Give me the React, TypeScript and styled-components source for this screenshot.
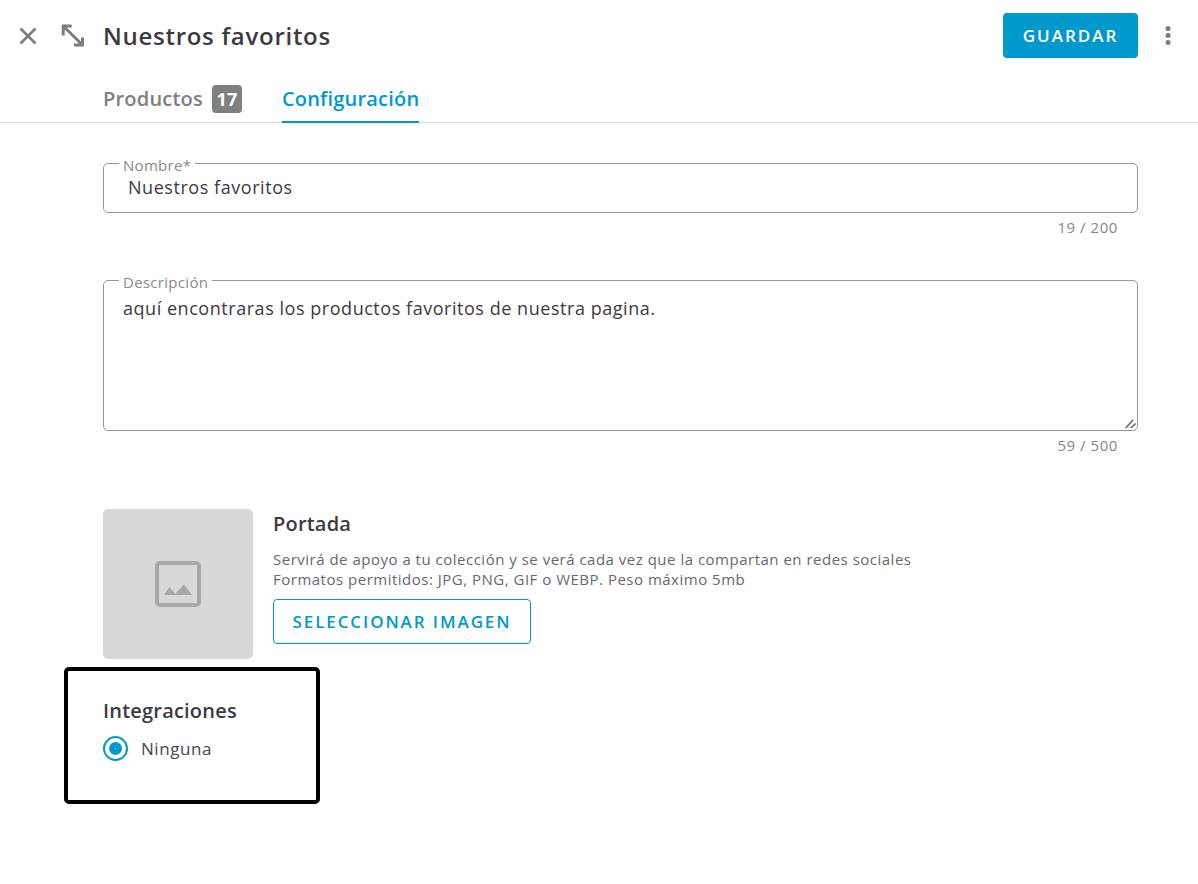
import React from "react";
import styled, { createGlobalStyle } from "styled-components";

const Global = createGlobalStyle`
  html, body { margin: 0; padding: 0; background: #fff; }
  body { font-family: "Open Sans", "Noto Sans", sans-serif; color: #3d3a3f; }
  * { box-sizing: border-box; }
`;

const Page = styled.div`
  width: 1198px;
  height: 884px;
  overflow: hidden;
  background: #fff;
`;

const Header = styled.header`
  height: 123px;
  border-bottom: 1px solid #dcdcdc;
  display: flex;
  flex-direction: column;
`;

const TopBar = styled.div`
  display: flex;
  align-items: center;
  height: 71px;
  padding: 0 60px 0 18px;
`;

const IconSlot = styled.span<{ $w: number }>`
  display: flex;
  color: #7d7d80;
  width: ${(p) => p.$w}px;
`;

const Title = styled.h1`
  margin: 0;
  flex: 1;
  font-size: 24px;
  line-height: 32px;
  font-weight: 600;
  letter-spacing: 0.72px;
  color: #3d3a3f;
`;

const SaveButton = styled.button`
  width: 135px;
  height: 45px;
  border: 0;
  border-radius: 4px;
  background: #0099cc;
  color: #fff;
  font: 600 17px "Open Sans", sans-serif;
  letter-spacing: 2px;
  padding: 0;
`;

const Kebab = styled.span`
  position: relative;
  width: 0;
  display: flex;
`;

const KebabIcon = styled.svg`
  position: absolute;
  left: 25px;
  top: -11px;
`;

const Tabs = styled.nav`
  display: flex;
  padding-left: 103px;
  gap: 40px;
  height: 51px;
`;

const Tab = styled.div<{ $active?: boolean }>`
  display: flex;
  align-items: center;
  gap: 9px;
  height: 52px;
  padding-top: 5px;
  font-size: 20px;
  font-weight: 600;
  letter-spacing: 0.2px;
  color: ${(p) => (p.$active ? "#0099cc" : "#808080")};
  border-bottom: ${(p) => (p.$active ? "2px solid #0099cc" : "2px solid transparent")};
`;

const Count = styled.span`
  width: 30px;
  height: 28px;
  border-radius: 4px;
  background: #808080;
  color: #fff;
  font-size: 18px;
  font-weight: 700;
  letter-spacing: 0;
  display: flex;
  align-items: center;
  justify-content: center;
`;

const Form = styled.main`
  padding: 32px 60px 0 103px;
`;

const Field = styled.fieldset<{ $h: number }>`
  margin: 0;
  padding: 0;
  height: ${(p) => p.$h}px;
  border: 1px solid #979797;
  border-radius: 5px;
  position: relative;
  min-width: 0;
`;

const Legend = styled.legend`
  margin-left: 15px;
  padding: 0 4px 0 4px;
  font-size: 15px;
  line-height: 20px;
  letter-spacing: 0.3px;
  color: #8a8a8a;
  height: 16px;
`;

const Value = styled.div`
  padding: 4px 0 0 24px;
  font-size: 18px;
  line-height: 24px;
  letter-spacing: 0.55px;
  color: #3d3a3f;
`;

const Area = styled.textarea`
  display: block;
  width: 100%;
  height: 142px;
  margin: 0;
  border: 0;
  outline: 0;
  padding: 8px 19px 0;
  background: transparent;
  font: 400 18px/24px "Open Sans", sans-serif;
  letter-spacing: 0.54px;
  color: #3d3a3f;
  border-radius: 0 0 5px 0;
  resize: both;

  &::-webkit-resizer {
    background: url("data:image/svg+xml,%3Csvg xmlns='http://www.w3.org/2000/svg' width='15' height='15'%3E%3Cpath d='M3.700 13 11 5M8.700 13 13.700 8.500' stroke='%23666' stroke-width='1.600' fill='none'/%3E%3C/svg%3E") no-repeat;
  }
`;

const Counter = styled.div<{ $mb: number }>`
  text-align: right;
  padding-right: 20px;
  font-size: 15px;
  line-height: 19px;
  letter-spacing: 0.55px;
  margin-top: 5px;
  margin-bottom: ${(p) => p.$mb}px;
  color: #858585;
`;

const Cover = styled.section`
  display: flex;
  gap: 20px;
`;

const Thumb = styled.div`
  width: 150px;
  height: 150px;
  border-radius: 5px;
  background: #d8d8d8;
  display: flex;
  align-items: center;
  justify-content: center;
`;

const CoverBody = styled.div`
  display: flex;
  flex-direction: column;
  align-items: flex-start;
  padding-top: 3px;
`;

const SectionTitle = styled.h2`
  margin: 0;
  font-size: 20px;
  line-height: 24px;
  font-weight: 600;
  letter-spacing: 0.2px;
  color: #3d3a3f;
`;

const Help = styled.p`
  margin: 13px 0 10px;
  font-size: 15px;
  line-height: 20px;
  letter-spacing: 0.5px;
  color: #6b676c;
`;

const OutlineButton = styled.button`
  width: 258px;
  height: 45px;
  padding: 0;
  border: 1px solid #0099cc;
  border-radius: 4px;
  background: #fff;
  color: #0099cc;
  font: 600 17px "Open Sans", sans-serif;
  letter-spacing: 1.9px;
`;

const Integrations = styled.section`
  width: 256px;
  height: 137px;
  margin: 8px 0 0 -39px;
  border: 4px solid #000;
  border-radius: 5px;
  padding: 28px 0 0 35px;
`;

const Radio = styled.label`
  display: flex;
  align-items: center;
  gap: 13px;
  margin-top: 13px;
  font-size: 17px;
  line-height: 24px;
  letter-spacing: 0.55px;
  color: #4a474c;
`;

const RadioDot = styled.span`
  width: 25px;
  height: 25px;
  border: 2.5px solid #0099cc;
  border-radius: 50%;
  display: flex;
  align-items: center;
  justify-content: center;
  &::after {
    content: "";
    width: 13px;
    height: 13px;
    border-radius: 50%;
    background: radial-gradient(circle, #b5e0ef 0 0.4px, #0099cc 1px);
  }
`;

export default function App() {
  return (
    <Page>
      <Global />
      <Header>
        <TopBar>
          <IconSlot $w={42}>
            <svg width="20" height="20" viewBox="0 0 20 20" fill="none" stroke="currentColor" strokeWidth="2.6">
              <path d="M2.500 2.500 17.500 17.500M17.500 2.500 2.500 17.500" />
            </svg>
          </IconSlot>
          <IconSlot $w={43}>
            <svg width="28" height="26" viewBox="0 0 28 26" fill="none" stroke="currentColor" strokeWidth="3">
              <path d="M3.200 3 22.500 22M3.200 12.500V3H11.700M22.500 14.500V22H14" />
            </svg>
          </IconSlot>
          <Title>Nuestros favoritos</Title>
          <SaveButton>GUARDAR</SaveButton>
          <Kebab>
            <KebabIcon width="10" height="22" viewBox="0 0 10 22" fill="#7d7d80">
              <circle cx="5" cy="3.500" r="2.500" />
              <circle cx="5" cy="10.500" r="2.500" />
              <circle cx="5" cy="17.500" r="2.500" />
            </KebabIcon>
          </Kebab>
        </TopBar>
        <Tabs>
          <Tab>
            Productos <Count>17</Count>
          </Tab>
          <Tab $active>Configuración</Tab>
        </Tabs>
      </Header>
      <Form>
        <Field $h={58}>
          <Legend>Nombre*</Legend>
          <Value>Nuestros favoritos</Value>
        </Field>
        <Counter $mb={35}>19 / 200</Counter>
        <Field $h={159}>
          <Legend>Descripción</Legend>
          <Area defaultValue="aquí encontraras los productos favoritos de nuestra pagina." />
        </Field>
        <Counter $mb={54}>59 / 500</Counter>
        <Cover>
          <Thumb>
            <svg width="46" height="46" viewBox="0 0 46 46" fill="none">
              <rect x="2" y="2" width="42" height="42" rx="3" stroke="#a9a7a9" strokeWidth="4" />
              <path d="M9 34 14.500 26 20 33 29 23.500 37 34Z" fill="#a9a7a9" />
            </svg>
          </Thumb>
          <CoverBody>
            <SectionTitle>Portada</SectionTitle>
            <Help>
              Servirá de apoyo a tu colección y se verá cada vez que la compartan en redes sociales
              <br />
              Formatos permitidos: JPG, PNG, GIF o WEBP. Peso máximo 5mb
            </Help>
            <OutlineButton>SELECCIONAR IMAGEN</OutlineButton>
          </CoverBody>
        </Cover>
        <Integrations>
          <SectionTitle>Integraciones</SectionTitle>
          <Radio>
            <RadioDot />
            Ninguna
          </Radio>
        </Integrations>
      </Form>
    </Page>
  );
}
